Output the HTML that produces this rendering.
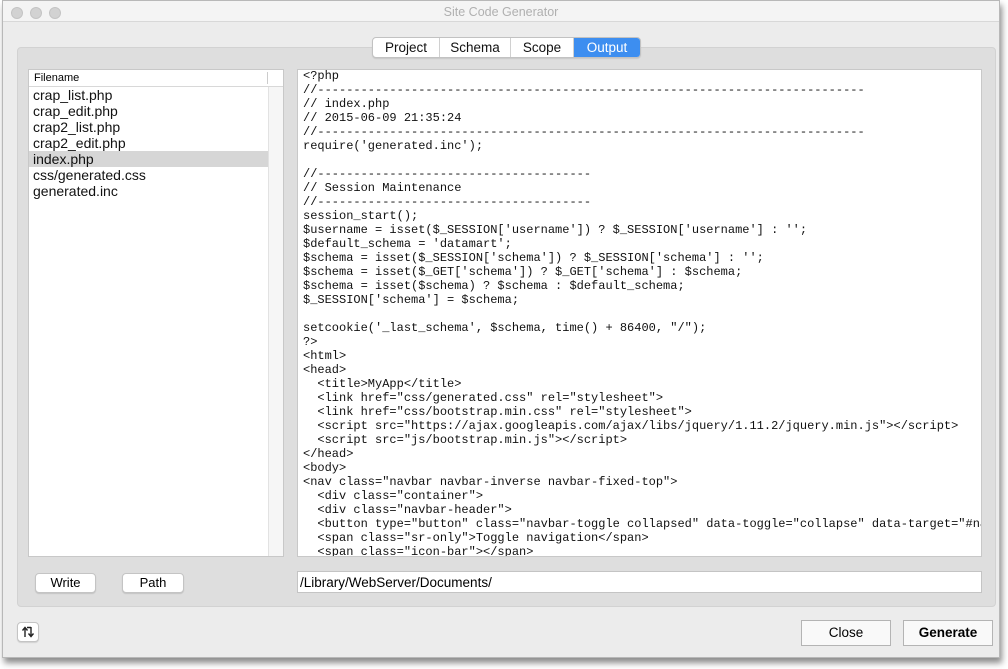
<!DOCTYPE html>
<html><head><meta charset="utf-8"><style>
*{margin:0;padding:0;box-sizing:border-box}
body{width:1008px;height:669px;background:#fff;position:relative;overflow:hidden;font-family:"Liberation Sans",sans-serif;}
.win{position:absolute;left:2px;top:0;width:998px;height:658px;background:#ececec;border:1px solid #b8b8b8;box-shadow:2px 5px 6px rgba(0,0,0,.45);}
.title{position:absolute;left:0;top:0;width:100%;height:21px;background:#f4f4f4;border-bottom:1px solid #d8d8d8;text-align:center;font-size:12.5px;color:#b0b0b0;line-height:22px}
.dot{position:absolute;top:6px;width:12px;height:12px;border-radius:50%;background:#d2d2d2;border:1px solid #c4c4c4}
.panel{position:absolute;left:14px;top:46px;width:979px;height:560px;background:#dedede;border-radius:4px;border:1px solid #d2d2d2}
.tabs{position:absolute;left:369px;top:36px;height:21px;display:flex;border:1px solid #c2c2c2;border-radius:4px;background:#fff;overflow:hidden;box-shadow:0 1px 1px rgba(0,0,0,.1)}
.tabs div{font-size:13.5px;line-height:19px;text-align:center;border-right:1px solid #d0d0d0;color:#111}
.list{position:absolute;left:10px;top:21px;width:256px;height:488px;background:#fff;border:1px solid #c8c8c8}
.hdr{height:17px;border-bottom:1px solid #d8d8d8;font-size:11px;line-height:17px;padding-left:5px;position:relative}
.hdr:after{content:"";position:absolute;left:238px;top:2px;height:12px;border-left:1px solid #ccc}
.item{height:16px;font-size:14px;line-height:16px;padding-left:4px;width:239px;color:#111}
.sel{background:#d6d6d6}
.strip{position:absolute;left:239px;top:17px;width:15px;bottom:0;background:#f6f6f6;border-left:1px solid #e2e2e2}
.code{position:absolute;left:279px;top:21px;width:685px;height:488px;background:#fff;border:1px solid #c8c8c8;overflow:hidden}
pre{font-family:"Liberation Mono",monospace;font-size:12px;line-height:14px;padding:0 0 0 5px;margin-top:-1px;white-space:pre;color:#111}
.btn{position:absolute;background:#fff;border:1px solid #c4c4c4;border-radius:4px;font-size:13px;text-align:center;box-shadow:0 1px 1px rgba(0,0,0,.12)}
.field{position:absolute;left:279px;top:523px;width:685px;height:22px;background:#fff;border:1px solid #c4c4c4;font-size:13.5px;line-height:21px;padding-left:2px}
.bb{position:absolute;background:#f9f9f9;border:1px solid #b4b4b4;font-size:13.5px;text-align:center;line-height:23px}
</style></head><body>
<div class="win">
 <div class="title">Site Code Generator
  <div class="dot" style="left:8px"></div><div class="dot" style="left:27px"></div><div class="dot" style="left:46px"></div>
 </div>
 <div class="panel">
  <div class="list">
   <div class="hdr">Filename</div>
   <div class="strip"></div>
   <div class="item">crap_list.php</div>
   <div class="item">crap_edit.php</div>
   <div class="item">crap2_list.php</div>
   <div class="item">crap2_edit.php</div>
   <div class="item sel">index.php</div>
   <div class="item">css/generated.css</div>
   <div class="item">generated.inc</div>
  </div>
  <div class="code"><pre>&lt;?php
//----------------------------------------------------------------------------
// index.php
// 2015-06-09 21:35:24
//----------------------------------------------------------------------------
require('generated.inc');

//--------------------------------------
// Session Maintenance
//--------------------------------------
session_start();
$username = isset($_SESSION['username']) ? $_SESSION['username'] : '';
$default_schema = 'datamart';
$schema = isset($_SESSION['schema']) ? $_SESSION['schema'] : '';
$schema = isset($_GET['schema']) ? $_GET['schema'] : $schema;
$schema = isset($schema) ? $schema : $default_schema;
$_SESSION['schema'] = $schema;

setcookie('_last_schema', $schema, time() + 86400, "/");
?&gt;
&lt;html&gt;
&lt;head&gt;
  &lt;title&gt;MyApp&lt;/title&gt;
  &lt;link href="css/generated.css" rel="stylesheet"&gt;
  &lt;link href="css/bootstrap.min.css" rel="stylesheet"&gt;
  &lt;script src="https://ajax.googleapis.com/ajax/libs/jquery/1.11.2/jquery.min.js"&gt;&lt;/script&gt;
  &lt;script src="js/bootstrap.min.js"&gt;&lt;/script&gt;
&lt;/head&gt;
&lt;body&gt;
&lt;nav class="navbar navbar-inverse navbar-fixed-top"&gt;
  &lt;div class="container"&gt;
  &lt;div class="navbar-header"&gt;
  &lt;button type="button" class="navbar-toggle collapsed" data-toggle="collapse" data-target="#navbar"&gt;
  &lt;span class="sr-only"&gt;Toggle navigation&lt;/span&gt;
  &lt;span class="icon-bar"&gt;&lt;/span&gt;</pre></div>
  <div class="btn" style="left:17px;top:525px;width:61px;height:20px;line-height:18px">Write</div>
  <div class="btn" style="left:104px;top:525px;width:62px;height:20px;line-height:18px">Path</div>
  <div class="field">/Library/WebServer/Documents/</div>
 </div>
 <div class="tabs">
  <div style="width:67px">Project</div>
  <div style="width:71px">Schema</div>
  <div style="width:63px">Scope</div>
  <div style="width:66px;background:#3d8ef0;color:#fff;border-right:none">Output</div>
 </div>
 <div class="btn" style="left:14px;top:621px;width:22px;height:20px;font-size:12px;line-height:18px">
  <svg width="14" height="14" viewBox="0 0 14 14" style="margin-top:2px"><path d="M4 12V3M1.5 5.5L4 2.5 6.5 5.5M10 2v9M7.5 8.5L10 11.5 12.5 8.5M6 2.5H10" stroke="#222" stroke-width="1.4" fill="none"/></svg>
 </div>
 <div class="bb" style="left:798px;top:619px;width:90px;height:26px">Close</div>
 <div class="bb" style="left:900px;top:619px;width:90px;height:26px;font-weight:bold">Generate</div>
</div>
</body></html>
